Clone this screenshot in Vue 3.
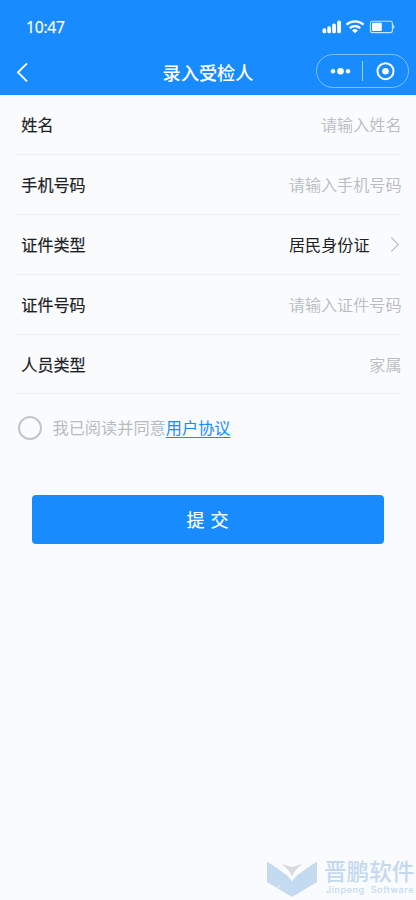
<script setup>
const fields = [
  { label: '姓名', hint: '请输入姓名' },
  { label: '手机号码', hint: '请输入手机号码' },
  { label: '证件类型', value: '居民身份证' },
  { label: '证件号码', hint: '请输入证件号码' },
  { label: '人员类型', hint: '家属' },
]
</script>

<template>
  <div class="page">
    <header class="top">
      <div class="status">
        <span class="time">10:47</span>
        <svg class="signals" width="74" height="16" viewBox="0 0 74 16">
          <g fill="#fff">
            <rect x="0.5" y="9.3" width="3.7" height="5" rx="1.6" />
            <rect x="5.3" y="7.2" width="3.7" height="7.1" rx="1.6" />
            <rect x="10.2" y="4.5" width="3.7" height="9.8" rx="1.6" />
            <rect x="15.2" y="1.6" width="3.7" height="12.7" rx="1.6" />
          </g>
          <g fill="none" stroke="#fff" stroke-width="2.3">
            <path d="M24.5 5.7a12.4 12.4 0 0 1 17 0" />
            <path d="M27.8 9.2a7.5 7.5 0 0 1 10.4 0" />
          </g>
          <path d="M30.1 11.4a4.2 4.2 0 0 1 5.8 0L33 14.3z" fill="#fff" />
          <rect x="48.4" y="2.2" width="22" height="11.4" rx="2" fill="none" stroke="#fff" stroke-opacity=".75" stroke-width="1.1" />
          <rect x="50" y="3.8" width="9.8" height="8.3" rx="1" fill="#fff" />
          <path d="M71.3 5.5v4.8q2-2.4 0-4.8z" fill="#fff" />
        </svg>
      </div>
      <div class="nav">
        <svg class="back" width="14" height="20" viewBox="0 0 14 20">
          <path d="M12 1.3 3 10.3l9 9" fill="none" stroke="#fff" stroke-width="1.9" />
        </svg>
        <h1>录入受检人</h1>
        <div class="capsule">
          <svg width="91" height="32" viewBox="0 0 91 32">
            <g fill="#fff">
              <circle cx="16" cy="16.2" r="2.2" />
              <circle cx="23.5" cy="16.2" r="3.3" />
              <circle cx="31" cy="16.2" r="2.2" />
              <circle cx="68.5" cy="16.2" r="3.3" />
            </g>
            <path d="M45.5 6v20" stroke="#fff" stroke-opacity=".6" />
            <circle cx="68.5" cy="16.2" r="8" fill="none" stroke="#fff" stroke-width="2" />
          </svg>
        </div>
      </div>
    </header>

    <main>
      <div v-for="field in fields" :key="field.label" class="row">
        <span class="label">{{ field.label }}</span>
        <span v-if="field.hint" class="hint">{{ field.hint }}</span>
        <template v-else>
          <span class="value">{{ field.value }}</span>
          <svg class="more" width="10" height="16" viewBox="0 0 10 16">
            <path d="M1.3 1.5 8.2 8.5l-6.9 7" fill="none" stroke="#bfc2c7" stroke-width="1.2" />
          </svg>
        </template>
      </div>
      <div class="agree">
        <span class="radio"></span>
        <span class="terms">我已阅读并同意<a>用户协议</a></span>
      </div>
      <button class="submit">提 交</button>
    </main>

    <footer class="brand">
      <svg width="52" height="38" viewBox="0 0 52 38">
        <path d="M1 1.5Q11 8 17 12.5 24 17 26 22 28 17 35 12.5 41 8 51 1.5V22L26 37 1 22z" fill="#c3daf1" />
        <path d="m10.5 26.5 5-2-2.6 4.2z" fill="#d6e6f6" />
        <path d="M15 4 25.5 7 37 4Q29 9 26 16.5 23 9 15 4z" fill="#d7dade" />
      </svg>
      <div class="brand-text">
        <span class="brand-name">晋鹏软件</span>
        <span class="brand-sub">Jinpeng&nbsp; Software</span>
      </div>
    </footer>
  </div>
</template>

<style>
body {
  background: #fafbfd;
}
</style>

<style scoped>
.page {
  display: flex;
  flex-direction: column;
  box-sizing: border-box;
  height: 900px;
  overflow: hidden;
  background: #fafbfd;
  color: #202124;
  font-family: "Noto Sans CJK SC", sans-serif;
  font-size: 16.1px;
}
.top {
  height: 95px;
  flex: none;
  background: #188bff;
  color: #fff;
}
.status {
  display: flex;
  justify-content: space-between;
  align-items: center;
  height: 53px;
  padding: 0 20px 0 26px;
}
.time {
  font-family: "Open Sans", "Noto Sans", sans-serif;
  font-size: 15.6px;
  line-height: 20px;
  letter-spacing: -0.2px;
  -webkit-text-stroke: 0.25px #fff;
}
.nav {
  display: grid;
  grid-template-columns: 108px 1fr 108px;
  align-items: center;
  height: 37px;
}
.back {
  margin-left: 14.5px;
}
h1 {
  margin: 0;
  text-align: center;
  font-size: 18.2px;
  font-weight: 500;
  line-height: 36px;
}
.capsule {
  box-sizing: border-box;
  width: 93px;
  height: 34px;
  margin: -1px 0 0 8px;
  border: 1px solid rgba(255, 255, 255, 0.45);
  border-radius: 17px;
}
.capsule svg {
  display: block;
}
main {
  flex: 1;
  padding: 0 16px;
}
.row {
  display: flex;
  align-items: center;
  box-sizing: border-box;
  height: 59.9px;
  padding-left: 5.3px;
  border-bottom: 1px solid #edf0f5;
}
.label {
  flex: 1;
  font-weight: 400;
  -webkit-text-stroke: 0.2px #202124;
}
.hint {
  color: #b9bcc1;
  font-weight: 350;
  margin-right: -1.5px;
}
.value {
  margin-right: 20.5px;
  font-weight: 400;
}
.agree {
  display: flex;
  align-items: center;
  height: 24px;
  margin-top: 21.5px;
  padding-left: 2px;
  color: #b8bbc0;
  font-size: 16.2px;
}
.radio {
  box-sizing: border-box;
  width: 24px;
  height: 24px;
  margin-right: 10.5px;
  border: 2px solid #c3c5ca;
  border-radius: 50%;
}
.terms {
  padding-bottom: 1px;
  line-height: 23px;
}
.agree a {
  color: #188bff;
  text-decoration: underline;
  text-decoration-thickness: 1px;
  text-underline-offset: 3px;
  text-decoration-skip-ink: none;
}
.submit {
  display: block;
  width: 352px;
  height: 49px;
  margin: 55px 0 0 15.5px;
  padding: 0;
  border: 0;
  border-radius: 4px;
  background: #188bff;
  color: #fff;
  font: 400 18px/49px "Noto Sans CJK SC", sans-serif;
  word-spacing: 2px;
  -webkit-text-stroke: 0.2px #fff;
}
.brand {
  display: flex;
  height: 40px;
  padding-left: 266px;
}
.brand-text {
  display: flex;
  flex-direction: column;
  margin-left: 6px;
  color: #c3d9f0;
  white-space: nowrap;
}
.brand-name {
  font-size: 22.6px;
  font-weight: 500;
  line-height: 22px;
}
.brand-sub {
  margin-left: 2px;
  font-family: "Inter", sans-serif;
  font-size: 9px;
  font-weight: 500;
  line-height: 16px;
  letter-spacing: 0.58px;
}
</style>
